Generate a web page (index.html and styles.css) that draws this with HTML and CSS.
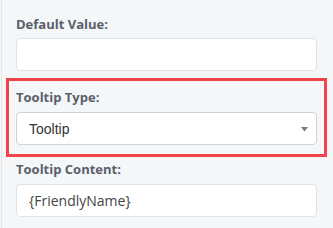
FILE: index.html
```html
<!DOCTYPE html>
<html>
<head>
<meta charset="utf-8">
<link rel="stylesheet" href="styles.css">
</head>
<body>
<div class="panel">
  <label class="label first">Default Value:</label>
  <input class="field" type="text" value="">
  <div class="highlight">
    <label class="label">Tooltip Type:</label>
    <div class="select-wrap">
      <select class="select"><option>Tooltip</option></select>
      <svg class="caret" width="7" height="5" viewBox="0 0 7 5"><path d="M0 0 H7 L3.5 4.5 Z" fill="#7a7a7a"/></svg>
    </div>
  </div>
  <label class="label after">Tooltip Content:</label>
  <input class="field content" type="text" value="{FriendlyName}">
</div>
</body>
</html>
```
FILE: styles.css
```css
html, body {
  margin: 0;
  padding: 0;
  background: #f5f6f8;
  height: 100%;
}
.panel {
  margin-left: 1px;
  border-left: 1px solid #e4e6ea;
  padding: 15px 16px 0 14px;
  height: 100%;
  box-sizing: border-box;
  display: flex;
  flex-direction: column;
}
.label {
  display: block;
  font-family: "Open Sans", sans-serif;
  font-weight: 700;
  font-size: 13px;
  line-height: 18px;
  color: #59606c;
  margin-bottom: 6px;
}
.label.first {
  margin-bottom: 5px;
}
.label.after {
  margin-top: 3px;
}
.field {
  display: block;
  box-sizing: border-box;
  width: 100%;
  height: 33px;
  margin: 0;
  border: 1px solid #e0e3e7;
  border-radius: 4px;
  background: #fff;
  padding: 0 12px;
  font-family: "Open Sans", sans-serif;
  font-size: 14px;
  color: #444;
  outline: none;
}
.highlight {
  margin: 7px -10px 0 -10px;
  border: 3px solid #f0434a;
  padding: 7px 7px 9px 7px;
}
.select-wrap {
  position: relative;
}
.select {
  display: block;
  box-sizing: border-box;
  width: 100%;
  height: 33px;
  margin: 0;
  -webkit-appearance: none;
  appearance: none;
  border: 1px solid #cfd2d6;
  border-radius: 4px;
  background: #fff;
  padding: 0 12px;
  font-family: "Liberation Sans", Arial, sans-serif;
  font-size: 14px;
  color: #333;
  outline: none;
}
.caret {
  position: absolute;
  right: 9px;
  top: 15px;
}
```
